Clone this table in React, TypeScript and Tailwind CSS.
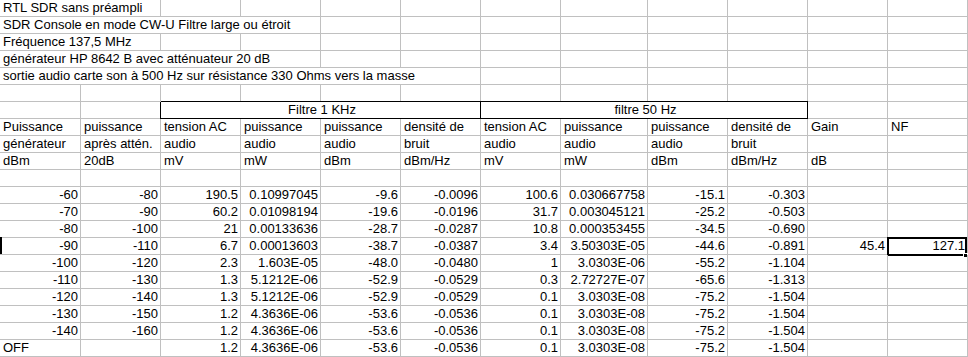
import React from "react";

type C = { t?: string; span?: number; r?: boolean; cls?: string; extra?: React.ReactNode };

const E: C = {};
const empties = (n: number): C[] => Array.from({ length: n }, () => ({}));

const textRow = (t: string, span: number): C[] => [{ t, span }, ...empties(12 - span)];

const headers: string[][] = [
  ["Puissance", "puissance", "tension AC", "puissance", "puissance", "densité de", "tension AC", "puissance", "puissance", "densité de", "Gain", "NF"],
  ["générateur", "après attén.", "audio", "audio", "audio", "bruit", "audio", "audio", "audio", "bruit", "", ""],
  ["dBm", "20dB", "mV", "mW", "dBm", "dBm/Hz", "mV", "mW", "dBm", "dBm/Hz", "dB", ""],
];

const data: string[][] = [
  ["-60", "-80", "190.5", "0.10997045", "-9.6", "-0.0096", "100.6", "0.030667758", "-15.1", "-0.303", "", ""],
  ["-70", "-90", "60.2", "0.01098194", "-19.6", "-0.0196", "31.7", "0.003045121", "-25.2", "-0.503", "", ""],
  ["-80", "-100", "21", "0.00133636", "-28.7", "-0.0287", "10.8", "0.000353455", "-34.5", "-0.690", "", ""],
  ["-90", "-110", "6.7", "0.00013603", "-38.7", "-0.0387", "3.4", "3.50303E-05", "-44.6", "-0.891", "45.4", "127.1"],
  ["-100", "-120", "2.3", "1.603E-05", "-48.0", "-0.0480", "1", "3.0303E-06", "-55.2", "-1.104", "", ""],
  ["-110", "-130", "1.3", "5.1212E-06", "-52.9", "-0.0529", "0.3", "2.72727E-07", "-65.6", "-1.313", "", ""],
  ["-120", "-140", "1.3", "5.1212E-06", "-52.9", "-0.0529", "0.1", "3.0303E-08", "-75.2", "-1.504", "", ""],
  ["-130", "-150", "1.2", "4.3636E-06", "-53.6", "-0.0536", "0.1", "3.0303E-08", "-75.2", "-1.504", "", ""],
  ["-140", "-160", "1.2", "4.3636E-06", "-53.6", "-0.0536", "0.1", "3.0303E-08", "-75.2", "-1.504", "", ""],
  ["OFF", "", "1.2", "4.3636E-06", "-53.6", "-0.0536", "0.1", "3.0303E-08", "-75.2", "-1.504", "", ""],
];

const spanClass: Record<number, string> = {
  1: "col-span-1",
  2: "col-span-2",
  3: "col-span-3",
  4: "col-span-4",
  5: "col-span-5",
  6: "col-span-6",
};

function buildRows(): C[][] {
  const rows: C[][] = [];
  rows.push(textRow("RTL SDR sans préampli", 2));
  rows.push(textRow("SDR Console en mode CW-U Filtre large ou étroit", 4));
  rows.push(textRow("Fréquence 137,5 MHz", 2));
  rows.push(textRow("générateur HP 8642 B avec atténuateur 20 dB", 4));
  rows.push(textRow("sortie audio carte son à 500 Hz sur résistance 330 Ohms vers la masse", 6));
  rows.push(empties(12));
  rows.push([
    E,
    E,
    { t: "Filtre 1 KHz", span: 4, cls: "text-center border-r-black border-b-black shadow-[0_-1px_0_#000,-1px_0_0_#000]" },
    { t: "filtre 50 Hz", span: 4, cls: "text-center border-r-black border-b-black shadow-[0_-1px_0_#000]" },
    E,
    E,
  ]);
  headers.forEach((h) => rows.push(h.map((t) => ({ t }))));
  rows.push(empties(12));
  data.forEach((d, ri) =>
    rows.push(
      d.map((t, ci) => {
        const c: C = { t, r: t !== "OFF" };
        if (ri === 3 && ci === 0) {
          c.extra = <span className="absolute left-0 top-[-1px] bottom-0 w-[2px] bg-black" />;
        }
        if (ri === 3 && ci === 11) {
          c.extra = (
            <>
              <span className="absolute -left-px -top-px right-0 -bottom-[2px] border-2 border-black" />
              <span className="absolute -right-px -bottom-[4px] w-[5px] h-[5px] bg-black border border-white" />
            </>
          );
        }
        return c;
      })
    )
  );
  return rows;
}

export default function App() {
  const rows = buildRows();
  return (
    <div
      className="w-[968px] h-[357px] overflow-hidden bg-white text-black text-[13px] leading-[16px]"
      style={{ fontFamily: '"Liberation Sans", Arial, sans-serif' }}
    >
      <div className="grid grid-cols-[81px_80px_80px_80px_80px_80px_80px_87px_80px_80px_80px_80px] auto-rows-[17px]">
        {rows.map((row, ri) =>
          row.map((c, ci) => (
            <div
              key={`${ri}-${ci}`}
              className={`relative h-[17px] border-r border-b border-[#c0c0c0] whitespace-nowrap ${
                c.r ? "text-right pr-[2px]" : "pl-[3px]"
              } ${spanClass[c.span ?? 1]} ${c.cls ?? ""}`}
            >
              {c.t}
              {c.extra}
            </div>
          ))
        )}
      </div>
    </div>
  );
}
